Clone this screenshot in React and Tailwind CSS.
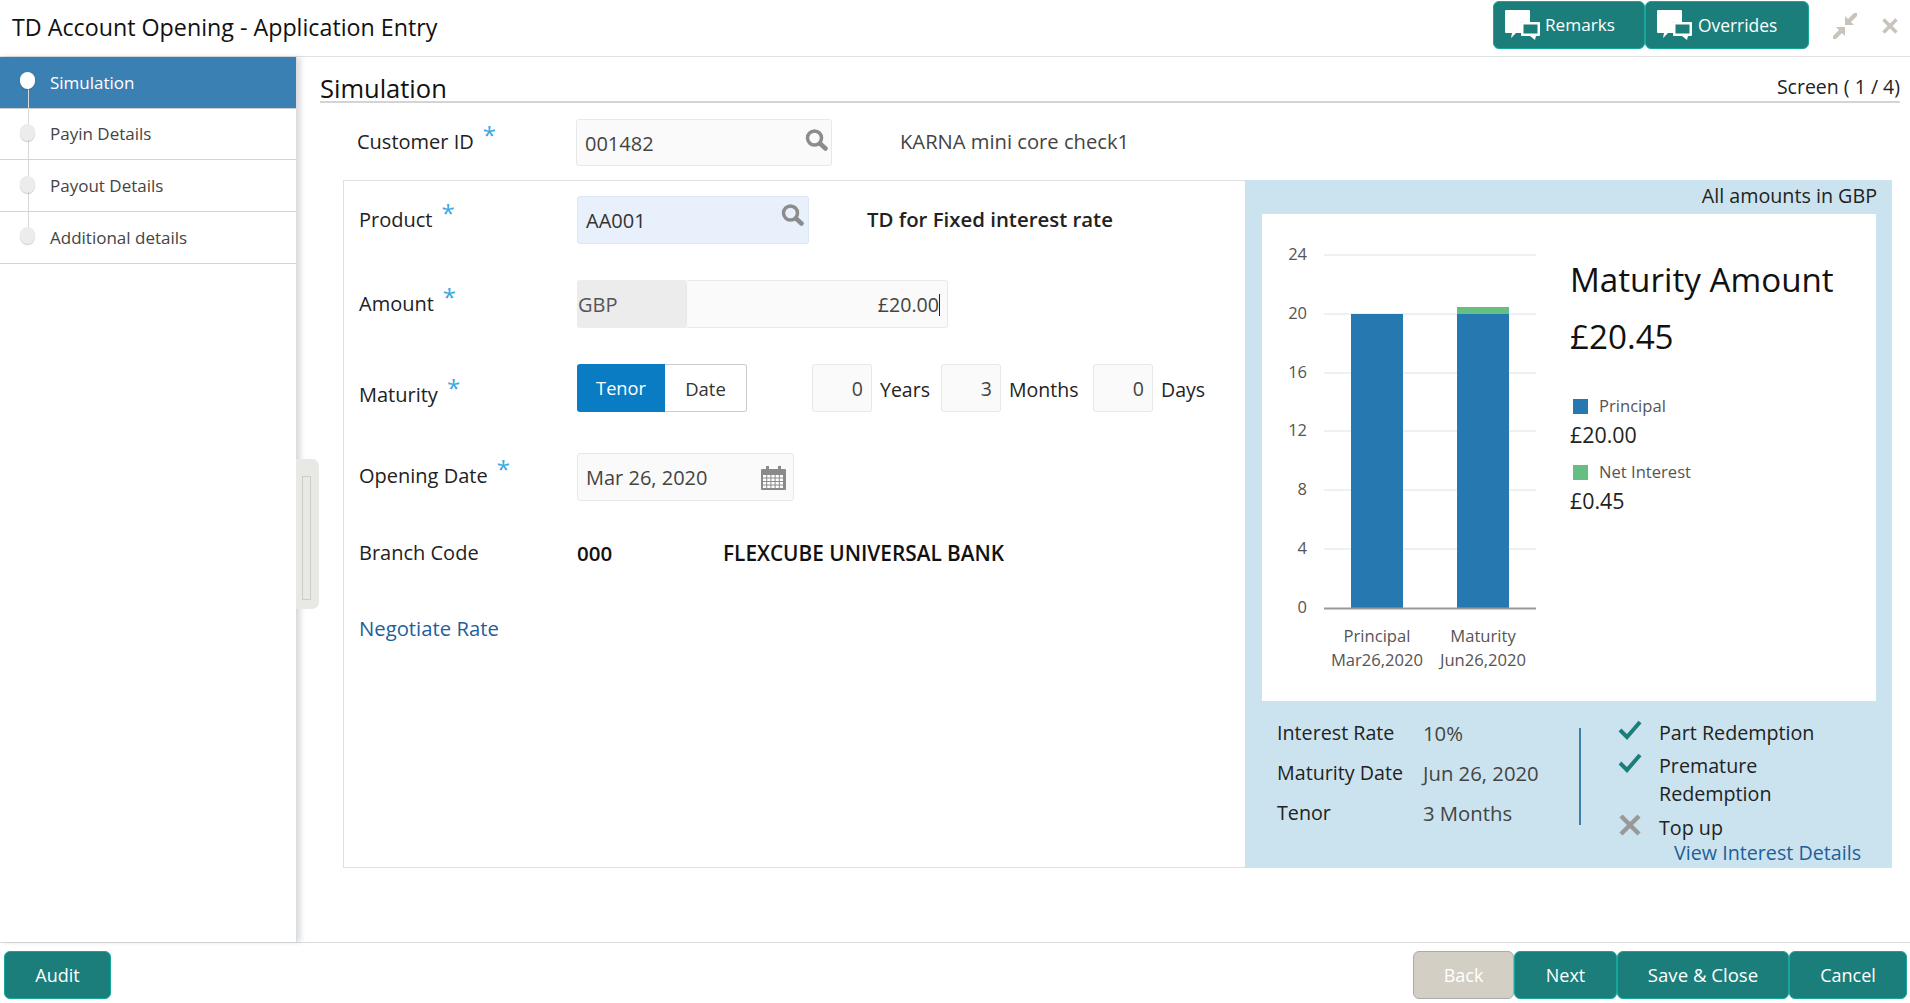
import React from 'react';

const steps = [
  { label: 'Simulation', active: true },
  { label: 'Payin Details' },
  { label: 'Payout Details' },
  { label: 'Additional details' },
];

function ChatIcon() {
  return (
    <svg width="36" height="31" viewBox="0 0 36 31" className="shrink-0" aria-hidden="true">
      <path d="M1 0h23a1 1 0 0 1 1 1v11h-9v11H11l-5 5 1-5H1a1 1 0 0 1-1-1V1a1 1 0 0 1 1-1z" fill="#fff" />
      <path d="M17 12h17a1 1 0 0 1 1 1v12a1 1 0 0 1-1 1h-3l-1 4-5-4h-8a1 1 0 0 1-1-1V13a1 1 0 0 1 1-1z" fill="#fff" />
      <rect x="18.5" y="14.5" width="14" height="9" fill="#1b7e7a" />
    </svg>
  );
}

function SearchIcon({ className = '' }) {
  return (
    <svg width="23" height="22" viewBox="0 0 23 22" className={className} aria-hidden="true">
      <circle cx="9.5" cy="9" r="7" fill="none" stroke="#8c8c8c" strokeWidth="3.5" />
      <path d="M15 14.5l5.5 5" fill="none" stroke="#8c8c8c" strokeWidth="4.5" strokeLinecap="round" />
    </svg>
  );
}

function Star() {
  return <span className="text-[#3aa6e0] text-[24px] leading-[0] ml-[9px] align-[5px]">*</span>;
}

function FieldLabel({ children, required, className = '' }) {
  return (
    <div className={`text-[20px] text-[#222] leading-[24px] ${className}`}>
      {children}
      {required && <Star />}
    </div>
  );
}

function TextBox({ value, className = '', right, children }) {
  return (
    <div className={`flex items-center border border-[#e8e8e8] bg-[#fafafa] rounded-[3px] text-[#444] ${right ? 'justify-end' : ''} ${className}`}>
      {value}
      {children}
    </div>
  );
}

function SmallBox({ value }) {
  return <TextBox value={value} right className="w-[60px] h-[48px] pr-[8px] pt-px text-[19.5px]" />;
}

function TealButton({ children, className = '' }) {
  return (
    <button className={`h-[48px] flex items-center justify-center rounded-[6px] bg-[#1b7e7a] border border-[#14a89c] text-white ${className}`}>
      {children}
    </button>
  );
}

function CalendarIcon() {
  return (
    <svg width="25" height="24" viewBox="0 0 25 24" aria-hidden="true">
      <rect x="0" y="3" width="25" height="21" rx="1" fill="#8a8a8a" />
      <rect x="5" y="0" width="3" height="5" fill="#8a8a8a" />
      <rect x="17" y="0" width="3" height="5" fill="#8a8a8a" />
      {[9, 12.5, 16, 19.5].map((y) =>
        [2, 6.2, 10.4, 14.6, 18.8].map((x) => (
          <rect key={`${x}-${y}`} x={x} y={y} width="3.2" height="2.5" fill="#fff" />
        ))
      )}
    </svg>
  );
}

function MaturityChart() {
  const grid = [
    { y: 41, label: '24' },
    { y: 100, label: '20' },
    { y: 159, label: '16' },
    { y: 217, label: '12' },
    { y: 276, label: '8' },
    { y: 335, label: '4' },
  ];
  return (
    <svg width="308" height="487" viewBox="0 0 308 487" className="shrink-0 font-['Open_Sans',sans-serif]" aria-hidden="true">
      {grid.map((g) => (
        <g key={g.y}>
          <line x1="62" x2="274" y1={g.y} y2={g.y} stroke="#e8ebf0" strokeWidth="1.5" />
          <text x="45" y={g.y + 5} textAnchor="end" fontSize="16.5" fill="#555">{g.label}</text>
        </g>
      ))}
      <text x="45" y="399" textAnchor="end" fontSize="16.5" fill="#555">0</text>
      <rect x="89" y="100" width="52" height="294" fill="#2679b0" />
      <rect x="195" y="100" width="52" height="294" fill="#2679b0" />
      <rect x="195" y="93" width="52" height="7" fill="#66bf82" />
      <line x1="62" x2="274" y1="394.5" y2="394.5" stroke="#999" strokeWidth="2" />
      <g fontSize="16.6" fill="#555" textAnchor="middle">
        <text x="115" y="428">Principal</text>
        <text x="115" y="452">Mar26,2020</text>
        <text x="221" y="428">Maturity</text>
        <text x="221" y="452">Jun26,2020</text>
      </g>
    </svg>
  );
}

function Check() {
  return (
    <svg width="24" height="20" viewBox="0 0 24 20" aria-hidden="true">
      <path d="M2 10l7 7L22 2" fill="none" stroke="#1b7e7a" strokeWidth="4" />
    </svg>
  );
}

function Cross() {
  return (
    <svg width="22" height="22" viewBox="0 0 22 22" aria-hidden="true">
      <path d="M2 2l18 18M20 2L2 20" fill="none" stroke="#999" strokeWidth="4.5" />
    </svg>
  );
}

export default function App() {
  return (
    <div className="w-[1910px] h-[1003px] flex flex-col bg-white overflow-hidden font-['Open_Sans',sans-serif]">
      {/* header */}
      <header className="h-[57px] shrink-0 border-b border-[#dfe2e6] flex items-start justify-between pl-[12px] pr-[12px]">
        <h1 className="text-[23.25px] font-normal leading-[54px] text-[#111]">TD Account Opening - Application Entry</h1>
        <div className="flex items-start pt-px">
          <TealButton className="w-[152px] pl-[11px] !justify-start gap-[4px] text-[17.2px]">
            <ChatIcon />
            Remarks
          </TealButton>
          <TealButton className="w-[164px] pl-[11px] !justify-start gap-[5px] text-[17.4px]">
            <ChatIcon />
            Overrides
          </TealButton>
          <svg width="26" height="26" viewBox="0 0 26 26" className="ml-[23px] mt-[12px]" aria-hidden="true">
            <path d="M25 0v3l-6 6 3 3H13V3l3 3 6-6zM1 26v-3l6-6-3-3h9v9l-3-3-6 6z" fill="#c8c4bc" />
          </svg>
          <svg width="16" height="16" viewBox="0 0 16 16" className="ml-[24px] mt-[17px]" aria-hidden="true">
            <path d="M1.5 1.5l13 13M14.5 1.5l-13 13" fill="none" stroke="#c8c4bc" strokeWidth="3.5" />
          </svg>
        </div>
      </header>

      <div className="flex-1 flex min-h-0">
        {/* left nav */}
        <aside className="relative w-[297px] shrink-0 border-r border-[#d8dce0] shadow-[4px_0_5px_rgba(0,0,0,0.13)]">
          <div className="absolute left-[28px] top-[25px] w-px h-[155px] bg-[#d8d8d8] z-10" />
          {steps.map((s) => (
            <div
              key={s.label}
              className={`h-[51.7px] flex items-center border-b-[1.5px] ${s.active ? 'bg-[#3b80b3] border-[#c8ced4] text-white' : 'border-[#d6d3ce] text-[#444]'}`}
            >
              <span className={`relative z-20 w-[15px] h-[17px] ml-[20px] -mt-[3px] rounded-full shadow-[0_1px_1px_rgba(0,0,0,0.2)] ${s.active ? 'bg-white' : 'bg-[#ececec]'}`} />
              <span className="ml-[15px] text-[17px]">{s.label}</span>
            </div>
          ))}
          <div className="absolute left-[296px] top-[402px] w-[23px] h-[150px] bg-[#e8e8e4] rounded-r-[7px] z-20 flex items-start pl-[6px] pt-[17px]">
            <div className="w-[9px] h-[124px] border border-[#ccc]" />
          </div>
        </aside>

        {/* main */}
        <main className="flex-1 min-w-0 pl-[23px]">
          <div className="h-[46px] mr-[10px] border-b-2 border-[#d4d4d4] flex items-end justify-between">
            <h2 className="text-[25.5px] font-normal leading-[26px] text-[#111]">Simulation</h2>
            <span className="text-[19.5px] leading-[28px] text-[#222]">Screen ( 1 / 4)</span>
          </div>

          <div className="flex items-center h-[47px] mt-[16px] pl-[37px]">
            <FieldLabel required className="w-[219px] -mt-[2px]">Customer ID</FieldLabel>
            <TextBox value="001482" className="relative w-[256px] h-[47px] pl-[8px] pt-[3px] text-[20px]">
              <SearchIcon className="absolute right-[3px] top-[9px]" />
            </TextBox>
            <span className="ml-[68px] text-[20.2px] text-[#444] -mt-[2px]">KARNA mini core check1</span>
          </div>

          <section className="flex ml-[23px] mt-[14px] w-[1549px] h-[688px]">
            {/* form */}
            <div className="w-[902px] border border-r-0 border-[#e0e0e0] pl-[15px] pt-[15px]">
              <div className="flex items-center h-[48px]">
                <FieldLabel required className="w-[218px]">Product</FieldLabel>
                <div className="relative flex items-center w-[232px] h-[48px] pl-[8px] pt-[2px] bg-[#e8f0fc] border border-[#dde6f2] rounded-[3px] text-[20px] text-[#333]">
                  AA001
                  <SearchIcon className="absolute right-[4px] top-[7px]" />
                </div>
                <span className="ml-[58px] -mt-[2px] text-[20.4px] font-semibold text-[#222]">TD for Fixed interest rate</span>
              </div>

              <div className="flex items-center h-[48px] mt-[36px]">
                <FieldLabel required className="w-[218px]">Amount</FieldLabel>
                <div className="w-[109px] h-[48px] flex items-center pl-[1px] pt-[2px] bg-[#ececec] rounded-l-[3px] text-[20px] text-[#555]">GBP</div>
                <TextBox right className="w-[262px] h-[48px] pr-[7px] pt-[2px] text-[19.6px]">
                  £20.00<span className="w-px h-[22px] bg-[#222]" />
                </TextBox>
              </div>

              <div className="flex items-center h-[48px] mt-[36px]">
                <FieldLabel required className="w-[218px] mt-[14px]">Maturity</FieldLabel>
                <div className="flex items-center justify-center w-[88px] h-[48px] pt-px bg-[#0a7cc4] rounded-l-[3px] text-white text-[18.2px]">Tenor</div>
                <div className="flex items-center justify-center w-[82px] h-[48px] pt-px border border-[#ccc] border-l-0 rounded-r-[3px] text-[18.5px] text-[#333]">Date</div>
                <div className="ml-[65px] flex items-center text-[19.5px] text-[#222]">
                  <SmallBox value="0" />
                  <span className="ml-[8px] w-[61px] pt-[3px]">Years</span>
                  <SmallBox value="3" />
                  <span className="ml-[8px] w-[84px] pt-[3px]">Months</span>
                  <SmallBox value="0" />
                  <span className="ml-[8px] pt-[3px]">Days</span>
                </div>
              </div>

              <div className="flex items-center h-[48px] mt-[41px]">
                <FieldLabel required className="w-[218px] -mt-[2px]">Opening Date</FieldLabel>
                <TextBox value="Mar 26, 2020" className="w-[217px] h-[48px] pl-[8px] pr-[7px] pt-px justify-between text-[20px]">
                  <CalendarIcon />
                </TextBox>
              </div>

              <div className="flex items-center h-[24px] mt-[40px]">
                <FieldLabel className="w-[218px]">Branch Code</FieldLabel>
                <span className="w-[146px] text-[20.5px] leading-[24px] font-semibold text-[#111]">000</span>
                <span className="text-[20.8px] leading-[24px] font-semibold text-[#111]">FLEXCUBE UNIVERSAL BANK</span>
              </div>

              <a className="block mt-[51px] text-[20.3px] leading-[24px] text-[#1f5f99]">Negotiate Rate</a>
            </div>

            {/* summary panel */}
            <div className="w-[647px] bg-[#cbe3ef]">
              <div className="h-[34px] flex items-center justify-end pr-[15px] pb-[2px] text-[19.7px] text-[#222]">All amounts in GBP</div>
              <div className="ml-[17px] w-[614px] h-[487px] bg-white flex">
                <MaturityChart />
                <div className="pt-[44px]">
                  <div className="text-[33.2px] leading-[44px] text-[#111]">Maturity Amount</div>
                  <div className="mt-[13px] text-[33.2px] leading-[44px] text-[#111]">£20.45</div>
                  <div className="mt-[36px] ml-[3px] flex items-center gap-[11px] h-[22px] text-[16.6px] text-[#555]">
                    <span className="w-[15px] h-[15px] bg-[#2679b0]" />
                    Principal
                  </div>
                  <div className="mt-[4px] text-[21.4px] leading-[28px] text-[#222]">£20.00</div>
                  <div className="mt-[12px] ml-[3px] flex items-center gap-[11px] h-[22px] text-[16.6px] text-[#555]">
                    <span className="w-[15px] h-[15px] bg-[#66bf82]" />
                    Net Interest
                  </div>
                  <div className="mt-[4px] text-[21.4px] leading-[28px] text-[#222]">£0.45</div>
                </div>
              </div>

              <div className="flex text-[19.7px] text-[#222]">
                <div className="w-[334px] pl-[32px] pt-[12px]">
                  {[
                    ['Interest Rate', '10%'],
                    ['Maturity Date', 'Jun 26, 2020'],
                    ['Tenor', '3 Months'],
                  ].map(([k, v]) => (
                    <div key={k} className="flex h-[40px] items-center">
                      <span className="w-[146px] leading-[26px]">{k}</span>
                      <span className="text-[#444] text-[20.3px] leading-[26px]">{v}</span>
                    </div>
                  ))}
                </div>
                <div className="w-[2px] h-[97px] mt-[27px] bg-[#3b80a8]" />
                <div className="ml-[37px] pt-[18px] w-[270px]">
                  <div className="flex items-start h-[33px]">
                    <span className="w-[41px] pt-px"><Check /></span>
                    <span className="leading-[28px]">Part Redemption</span>
                  </div>
                  <div className="flex items-start h-[62px]">
                    <span className="w-[41px] pt-[1px]"><Check /></span>
                    <span className="leading-[28px] w-[150px]">Premature Redemption</span>
                  </div>
                  <div className="flex items-center h-[28px]">
                    <span className="w-[41px] flex pl-px -mt-[6px]"><Cross /></span>
                    <span>Top up</span>
                  </div>
                  <a className="block ml-[56px] leading-[22px] text-[#1f5f99]">View Interest Details</a>
                </div>
              </div>
            </div>
          </section>
        </main>
      </div>

      {/* footer */}
      <footer className="h-[61px] shrink-0 border-t border-[#d8dee2] flex items-start justify-between pt-[8px] pl-[4px] pr-[3px]">
        <TealButton className="w-[107px] text-[18px]">Audit</TealButton>
        <div className="flex">
          <button className="w-[101px] h-[48px] rounded-[6px] bg-[#d4cfc5] border border-[#aaa] text-white text-[18px]">Back</button>
          <TealButton className="w-[103px] text-[18px]">Next</TealButton>
          <TealButton className="w-[172px] text-[18.6px]">Save &amp; Close</TealButton>
          <TealButton className="w-[118px] text-[18px]">Cancel</TealButton>
        </div>
      </footer>
    </div>
  );
}
